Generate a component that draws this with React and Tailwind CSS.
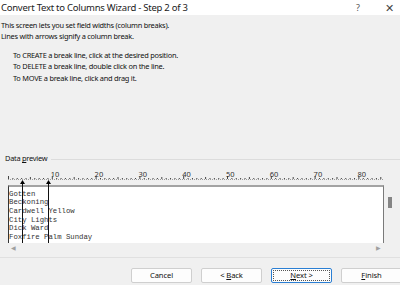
import React from 'react';

const ROWS = ['Gotten', 'Beckoning', 'Cardwell Yellow', 'City Lights', 'Dick Ward', 'Foxfire Palm Sunday'];
const CHAR_W = 4.38;

const Ruler = () => {
    const ticks = [];
    for (let i = 0; i <= 85; i++) {
        const x = 0.5 + i * CHAR_W;
        const h = i % 10 === 0 ? 3 : i % 5 === 0 ? 2 : 1;
        ticks.push(<line key={i} x1={x} x2={x} y1={11 - h} y2={11} stroke="#444" strokeWidth="1" />);
    }
    const labels = [10, 20, 30, 40, 50, 60, 70, 80];
    return (
        <svg width="376" height="17" className="block">
            <line x1="0" x2="376" y1="11.5" y2="11.5" stroke="#9a9a9a" strokeWidth="1" strokeDasharray="1 1" />
            {ticks}
            {labels.map(n => (
                <text key={n} x={0.5 + n * CHAR_W - 1.5} y="9" fontSize="7.5" fill="#333" fontFamily="'Noto Sans', sans-serif">{n}</text>
            ))}
        </svg>
    );
};

const BreakLine = ({ left }) => (
    <div className="absolute top-[12px] bottom-0 w-[5px] flex flex-col items-center" style={{ left: left - 2 }}>
        <svg width="5" height="4" className="block">
            <path d="M2.5 0 L5 4 L0 4 Z" fill="#000" />
        </svg>
        <div className="w-px flex-1 bg-[#111]" />
    </div>
);

const Btn = ({ children, focused }) => (
    <button
        className={`w-[61px] h-[15px] shrink-0 rounded-[2px] bg-[#fdfdfd] text-[7.6px] leading-none tracking-[-0.1px] text-[#111] flex items-center justify-center ${focused ? 'border border-[#2b7fd4] outline outline-1 outline-dotted outline-offset-[-3px] outline-[#555]' : 'border border-[#cfcfcf]'}`}
    >
        <span>{children}</span>
    </button>
);

export default function App() {
    return (
        <div className="w-[400px] h-[285px] bg-[#f0f0f0] overflow-hidden flex flex-col text-[#111]" style={{ fontFamily: "'Noto Sans', sans-serif" }}>
            {/* title bar */}
            <div className="h-[15px] bg-white flex items-center shrink-0">
                <span className="pl-px text-[9.5px] leading-none tracking-[-0.25px] text-[#222]">Convert Text to Columns Wizard - Step 2 of 3</span>
                <span className="ml-auto mr-[25px] text-[9px] text-[#555]">?</span>
                <span className="mr-[6px] text-[11px] leading-none text-[#444]">✕</span>
            </div>

            {/* instructions */}
            <div className="pt-[4.5px] pl-px text-[7.4px] leading-[11px] tracking-[-0.25px]">
                <div>This screen lets you set field widths (column breaks).</div>
                <div>Lines with arrows signify a column break.</div>
            </div>
            <div className="mt-[8px] pl-[13px] text-[7.4px] leading-[11.5px] tracking-[-0.25px]">
                <div>To CREATE a break line, click at the desired position.</div>
                <div>To DELETE a break line, double click on the line.</div>
                <div>To MOVE a break line, click and drag it.</div>
            </div>

            {/* data preview group */}
            <div className="mt-[69px] h-[12px] flex items-center pl-[5px] gap-1">
                <span className="text-[7.4px] leading-none tracking-[-0.25px]">Data <u>p</u>review</span>
                <div className="flex-1 h-px bg-[#dcdcdc]" />
            </div>

            <div className="mt-[3px] flex pl-[8px]">
                <div className="relative w-[376px]">
                    <Ruler />
                    <div className="h-[58px] bg-white border-t-2 border-t-[#a3a3a3] border-l border-l-[#333] border-r border-r-[#7a7a7a] pt-[2.5px]">
                        {ROWS.map(r => (
                            <div key={r} className="text-[7.3px] leading-[8.7px] whitespace-pre text-[#333]" style={{ fontFamily: "'Liberation Mono', monospace" }}>{r}</div>
                        ))}
                    </div>
                    <BreakLine left={13.5} />
                    <BreakLine left={40} />
                </div>
                <div className="w-[12px] pt-[29px] pl-[4px]">
                    <div className="w-[4px] h-[11px] bg-[#858585]" />
                </div>
            </div>

            {/* horizontal scrollbar */}
            <div className="ml-[8px] w-[376px] h-[10px] flex items-center justify-between px-[3px] text-[#a0a0a0] text-[6px] leading-none">
                <span>◀</span>
                <span>▶</span>
            </div>

            <div className="mt-[4px] h-px bg-[#e0e0e0]" />

            <div className="mt-[10px] flex justify-end gap-[9px] mr-[-2px]">
                <Btn>Cancel</Btn>
                <Btn>&lt; <u>B</u>ack</Btn>
                <Btn focused><u>N</u>ext &gt;</Btn>
                <Btn><u>F</u>inish</Btn>
            </div>
        </div>
    );
}
